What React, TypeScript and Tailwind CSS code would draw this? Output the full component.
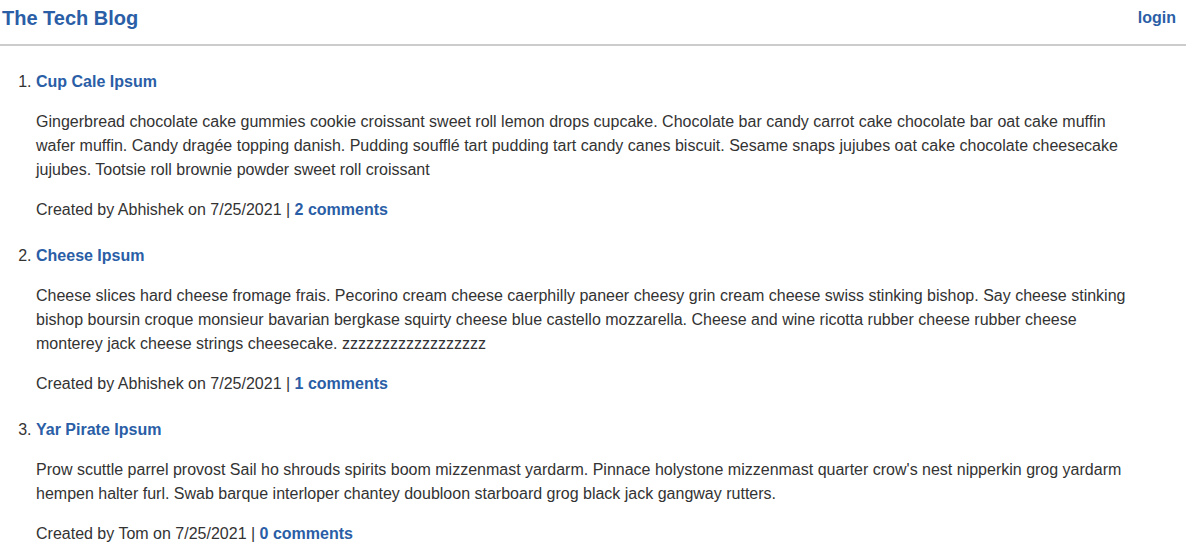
import React from "react";

const posts = [
  {
    title: "Cup Cale Ipsum",
    body: "Gingerbread chocolate cake gummies cookie croissant sweet roll lemon drops cupcake. Chocolate bar candy carrot cake chocolate bar oat cake muffin wafer muffin. Candy dragée topping danish. Pudding soufflé tart pudding tart candy canes biscuit. Sesame snaps jujubes oat cake chocolate cheesecake jujubes. Tootsie roll brownie powder sweet roll croissant",
    author: "Abhishek",
    comments: 2,
  },
  {
    title: "Cheese Ipsum",
    body: "Cheese slices hard cheese fromage frais. Pecorino cream cheese caerphilly paneer cheesy grin cream cheese swiss stinking bishop. Say cheese stinking bishop boursin croque monsieur bavarian bergkase squirty cheese blue castello mozzarella. Cheese and wine ricotta rubber cheese rubber cheese monterey jack cheese strings cheesecake. zzzzzzzzzzzzzzzzzz",
    author: "Abhishek",
    comments: 1,
  },
  {
    title: "Yar Pirate Ipsum",
    body: "Prow scuttle parrel provost Sail ho shrouds spirits boom mizzenmast yardarm. Pinnace holystone mizzenmast quarter crow's nest nipperkin grog yardarm hempen halter furl. Swab barque interloper chantey doubloon starboard grog black jack gangway rutters.",
    author: "Tom",
    comments: 0,
  },
];

export default function App() {
  return (
    <div className="min-h-[560px] bg-white text-[#333] font-['Liberation_Sans',Arial,sans-serif]">
      <header className="flex h-[46px] items-center justify-between border-b-2 border-[#cccccc] pl-[2px] pr-[10px]">
        <a className="text-[20px] font-bold leading-6 text-[#2a5ea6] -mt-[9px]">The Tech Blog</a>
        <a className="text-[16px] font-bold leading-6 text-[#2a5ea6] -mt-[9px]">login</a>
      </header>
      <ol className="list-decimal pl-[36px] pr-[40px] pt-[24px] text-[16px]">
        {posts.map((p) => (
          <li key={p.title} className="mb-[22px]">
            <a className="font-bold leading-6 text-[#2a5ea6]">{p.title}</a>
            <p className="mt-4 leading-6">{p.body}</p>
            <p className="mt-4 leading-6">
              Created by {p.author} on 7/25/2021 |{" "}
              <a className="font-bold text-[#2a5ea6]">{p.comments} comments</a>
            </p>
          </li>
        ))}
      </ol>
    </div>
  );
}
